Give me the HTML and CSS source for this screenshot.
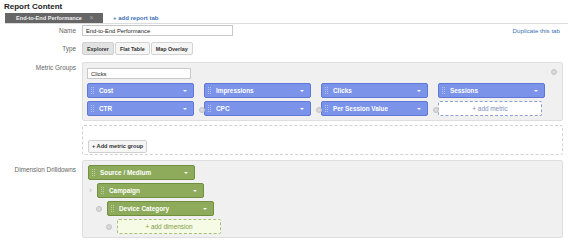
FILE: index.html
```html
<!DOCTYPE html>
<html>
    <head>
        <title>Report Content</title>
        <meta charset="utf-8">
        <link rel="stylesheet" href="styles.css">
    </head>
    <body>
        <h1 class="title">Report Content</h1>

        <div class="tabs">
            <div class="tab">End-to-End Performance <span class="tab-close">&times;</span></div>
            <a class="add-tab">+ add report tab</a>
        </div>

        <div class="row name-row">
            <div class="label">Name</div>
            <div class="field name-field">
                <input class="text-input name-input" type="text" value="End-to-End Performance">
                <a class="duplicate">Duplicate this tab</a>
            </div>
        </div>

        <div class="row type-row">
            <div class="label">Type</div>
            <div class="field">
                <button class="type-btn active">Explorer</button>
                <button class="type-btn">Flat Table</button>
                <button class="type-btn">Map Overlay</button>
            </div>
        </div>

        <div class="row box-row metric-row">
            <div class="label">Metric Groups</div>
            <div class="box metric-box">
                <span class="remove corner"></span>
                <input class="text-input group-input" type="text" value="Clicks">
                <div class="metrics">
                    <div class="pill blue"><span class="grip"></span>Cost<span class="caret"></span></div>
                    <div class="pill blue"><span class="grip"></span>Impressions<span class="caret"></span></div>
                    <div class="pill blue"><span class="grip"></span>Clicks<span class="caret"></span></div>
                    <div class="pill blue"><span class="grip"></span>Sessions<span class="caret"></span></div>
                    <div class="pill blue"><span class="grip"></span>CTR<span class="caret"></span></div>
                    <div class="pill blue"><span class="remove gap"></span><span class="grip"></span>CPC<span class="caret"></span></div>
                    <div class="pill blue"><span class="remove gap"></span><span class="grip"></span>Per Session Value<span class="caret"></span></div>
                    <div class="pill add-metric"><span class="remove gap"></span>+ add metric</div>
                </div>
            </div>
        </div>

        <div class="row add-group-row">
            <div class="label"></div>
            <div class="box dashed">
                <button class="add-group">+ Add metric group</button>
            </div>
        </div>

        <div class="row box-row dim-row">
            <div class="label">Dimension Drilldowns</div>
            <div class="box dim-box">
                <div class="level">
                    <div class="pill green"><span class="grip"></span>Source / Medium<span class="caret"></span></div>
                </div>
                <div class="level level-2">
                    <span class="chevron">&rsaquo;</span>
                    <div class="pill green"><span class="grip"></span>Campaign<span class="caret"></span></div>
                </div>
                <div class="level level-3">
                    <span class="remove side"></span>
                    <div class="pill green"><span class="grip"></span>Device Category<span class="caret"></span></div>
                </div>
                <div class="level level-4">
                    <span class="remove side"></span>
                    <div class="pill add-dim">+ add dimension</div>
                </div>
            </div>
        </div>
    </body>
</html>
```

FILE: styles.css
```css
body {margin: 0; padding: 0 5px 0 4px; font-family: "Liberation Sans", Arial, sans-serif; color: #333; background: #fff;}

.title {margin: 2px 0 0 0; font-size: 8px; line-height: 10px; font-weight: bold; color: #222;}

.tabs {display: flex; align-items: center; height: 10px; margin: 1px -5px 0 1px; border-bottom: 1px solid #dcdcdc;}
.tab {width: 98px; height: 10px; line-height: 10px; background: #666; color: #f0f0f0; font-size: 5.6px; font-weight: bold; padding-left: 11px; box-sizing: border-box;}
.tab-close {color: #aaa; margin-left: 6px; font-size: 7px; font-weight: normal;}
.add-tab {margin-left: 10px; font-size: 6px; font-weight: bold; color: #3b6fb6;}

.row {display: grid; grid-template-columns: 78px 1fr;}
.label {font-size: 6.4px; color: #666; text-align: right; padding-right: 6px; line-height: 10px;}
.field {display: flex; align-items: center;}

.name-row {margin-top: 1px;}
.name-field {justify-content: space-between; padding-right: 3px;}
.name-row .label {line-height: 11px;}
.text-input {height: 11px; box-sizing: border-box; border: 1px solid #c8c8c8; padding: 0 3px; font-family: "Liberation Sans", Arial, sans-serif; font-size: 5.8px; color: #222; background: #fff; margin: 0;}
.name-input {width: 151px;}
.duplicate {font-size: 6.2px; color: #3b6fb6;}

.type-row {margin-top: 6px;}
.type-row .label {line-height: 13px;}
.type-btn {height: 13px; margin: 0 1px 0 0; padding: 0 4px; border: 1px solid #d4d4d4; border-radius: 2px; background: #f6f6f6; font-family: "Liberation Sans", Arial, sans-serif; font-size: 5.4px; font-weight: bold; color: #333;}
.type-btn.active {background: #e2e2e2; border-color: #cfcfcf;}

.box {position: relative; background: #f0f0f0; border: 1px solid #dedede; border-radius: 2px;}
.box-row .label {padding-top: 6px;}
.metric-row .label {padding-top: 8px;}

.metric-box {margin-top: 7px; height: 59px; box-sizing: border-box; padding: 5px 0 0 4px;}
.group-input {display: block; width: 104px; height: 11px;}
.metrics {display: grid; grid-template-columns: repeat(4, 107px); column-gap: 10px; row-gap: 3px; margin-top: 4px;}

.pill {position: relative; display: flex; align-items: center; height: 15px; box-sizing: border-box; border-radius: 2px; padding-left: 11px; font-size: 6.4px; font-weight: bold; color: #fff;}
.pill.blue {background: #7b93e8; border: 1px solid #5f78d6;}
.pill.green {background: #8dab5b; border: 1px solid #71903f; width: 107px;}
.grip {position: absolute; left: 3px; top: 3px; width: 1px; height: 7px; border-left: 1px dotted rgba(255,255,255,0.45); border-right: 1px dotted rgba(255,255,255,0.45);}
.caret {position: absolute; right: 6px; top: 6px; width: 0; height: 0; border-left: 2px solid transparent; border-right: 2px solid transparent; border-top: 2px solid #fff;}

.add-metric {width: 104px; background: #fff; border: 1px dashed #8ea0d8; color: #7d8fbf; font-weight: normal; justify-content: center; padding-left: 0;}

.remove {display: block; width: 4px; height: 4px; border-radius: 50%; background: #d9d9d9; border: 1px solid #c4c4c4;}
.remove.corner {position: absolute; right: 5px; top: 6px;}
.remove.gap {position: absolute; left: -6px; top: 5px;}

.add-group-row {margin-top: 4px;}
.dashed {height: 30px; box-sizing: border-box; background: #fff; border: 1px dashed #d2d2d2; padding: 8px 0 0 5px;}
.add-group {height: 13px; padding: 0 3px; background: #f6f6f6; border: 1px solid #d0d0d0; border-radius: 2px; font-family: "Liberation Sans", Arial, sans-serif; font-size: 5.6px; font-weight: bold; color: #333;}

.dim-row {margin-top: 5px;}
.dim-row .label {padding-top: 5px;}
.dim-box {height: 78px; box-sizing: border-box; padding: 4px 0 0 5px;}
.level {display: flex; align-items: center; margin-bottom: 3px;}
.level-2 {padding-left: 0;}
.level-3 {padding-left: 8px;}
.level-4 {padding-left: 18px;}
.chevron {width: 9px; font-size: 9px; color: #b8b8b8; line-height: 9px; padding-left: 1px; box-sizing: border-box;}
.remove.side {margin-right: 5px;}
.add-dim {width: 104px; background: #f6fbe6; border: 1px dashed #a9c07a; color: #82a048; font-weight: normal; justify-content: center; padding-left: 0;}
```
